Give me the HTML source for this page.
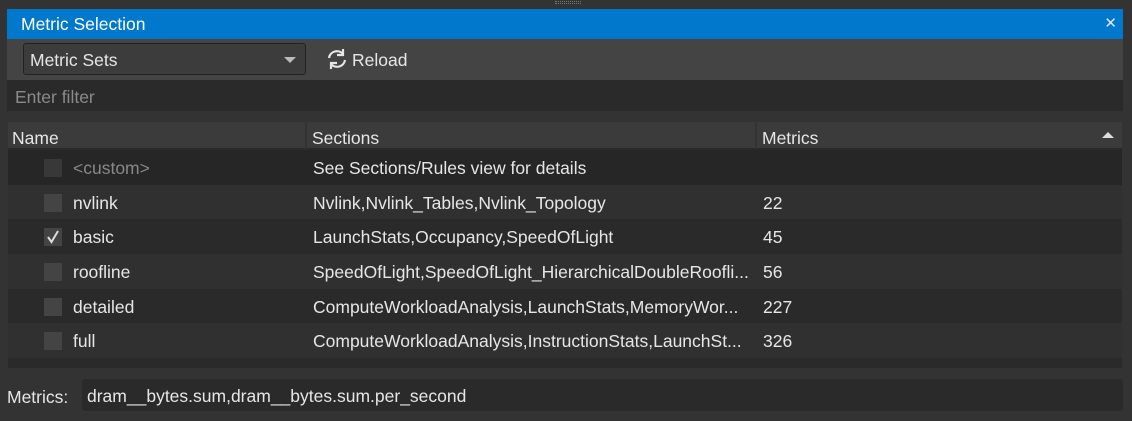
<!DOCTYPE html>
<html><head><style>
*{margin:0;padding:0;box-sizing:border-box}
body{width:1132px;height:421px;background:#333;font-family:"Liberation Sans",sans-serif;color:#e6e6e6;font-size:17.5px;position:relative;overflow:hidden}
.abs{position:absolute}
.title{left:7px;top:9px;width:1116px;height:30px;background:#0078cc;color:#fff;}
.title span{position:absolute;left:14px;top:5px;font-size:17.5px}
.title .x{left:auto;right:6px;top:5px;font-size:15px;color:#dbe9f7}
.tool{left:7px;top:39px;width:1116px;height:41px;background:#444}
.combo{left:23px;top:43px;width:283px;height:32px;background:#3c3c3c;border:1px solid #222;border-radius:3px}
.combo span{position:absolute;left:6px;top:6px}
.combo i{position:absolute;right:9px;top:13px;width:0;height:0;border-left:6px solid transparent;border-right:6px solid transparent;border-top:6px solid #bbb}
.filter{left:7px;top:80px;width:1116px;height:31px;background:#2a2a2a;color:#8a8a8a}
.filter span{position:absolute;left:8px;top:7px}
.table{left:8px;top:122px;width:1114px;height:246px;background:#2a2a2a}
.hdr{left:8px;top:122px;width:1114px;height:27px;background:#3b3b3b;border-bottom:1px solid #2a2a2a}
.hdr span{position:absolute;top:6px}
.sep{position:absolute;top:0;width:2px;height:27px;background:#333}
.row{position:absolute;left:8px;width:1114px}
.row span{position:absolute;top:8px;white-space:nowrap}
.cb{position:absolute;left:44px;top:9px;width:18px;height:18px;background:#444}
.lab{left:7px;top:387px}
.field{left:82px;top:379px;width:1041px;height:32px;background:#2a2a2a;border-radius:3px}
.field span{position:absolute;left:5px;top:7px}
</style></head><body>
<div class="abs" style="left:555px;top:1px;width:26px;height:3px;border-top:1px dotted #777;border-bottom:1px dotted #777"></div>
<div class="abs title"><span>Metric Selection</span><span class="x">✕</span></div>
<div class="abs tool"></div>
<div class="abs combo"><span>Metric Sets</span><i></i></div>
<svg class="abs" style="left:326px;top:48px" width="22" height="22" viewBox="0 0 22 22" fill="none" stroke="#e6e6e6" stroke-width="2.2"><path d="M3 10 A8 8 0 0 1 17 6"/><path d="M17 1v6h-6" stroke-linejoin="miter"/><path d="M19 12 A8 8 0 0 1 5 16"/><path d="M5 21v-6h6"/></svg>
<div class="abs" style="left:352px;top:50px">Reload</div>
<div class="abs filter"><span>Enter filter</span></div>
<div class="abs table"></div>
<div class="abs hdr"><span style="left:4px">Name</span><div class="sep" style="left:297px"></div><span style="left:304px">Sections</span><div class="sep" style="left:747px"></div><span style="left:754px">Metrics</span>
<i style="position:absolute;right:8px;top:10px;border-left:6px solid transparent;border-right:6px solid transparent;border-bottom:6px solid #ddd"></i></div>
<div class="row" style="top:150px;height:35px;background:#262626"><div class="cb" style="left:36px;background:#383838"></div><span style="left:65px;color:#888">&lt;custom&gt;</span><span style="left:305px">See Sections/Rules view for details</span></div>
<div class="row" style="top:185px;height:34px;background:#303030"><div class="cb" style="left:36px"></div><span style="left:65px">nvlink</span><span style="left:305px">Nvlink,Nvlink_Tables,Nvlink_Topology</span><span style="left:755px">22</span></div>
<div class="row" style="top:219px;height:35px;background:#2a2a2a"><div class="cb" style="left:36px"><svg width="18" height="18" viewBox="0 0 18 18"><path d="M4 9l3.5 5L14 3" fill="none" stroke="#ddd" stroke-width="2"/></svg></div><span style="left:65px">basic</span><span style="left:305px">LaunchStats,Occupancy,SpeedOfLight</span><span style="left:755px">45</span></div>
<div class="row" style="top:254px;height:35px;background:#303030"><div class="cb" style="left:36px"></div><span style="left:65px">roofline</span><span style="left:305px">SpeedOfLight,SpeedOfLight_HierarchicalDoubleRoofli...</span><span style="left:755px">56</span></div>
<div class="row" style="top:289px;height:34px;background:#2a2a2a"><div class="cb" style="left:36px"></div><span style="left:65px">detailed</span><span style="left:305px">ComputeWorkloadAnalysis,LaunchStats,MemoryWor...</span><span style="left:755px">227</span></div>
<div class="row" style="top:323px;height:35px;background:#303030"><div class="cb" style="left:36px"></div><span style="left:65px">full</span><span style="left:305px">ComputeWorkloadAnalysis,InstructionStats,LaunchSt...</span><span style="left:755px">326</span></div>
<div class="abs lab">Metrics:</div>
<div class="abs field"><span>dram__bytes.sum,dram__bytes.sum.per_second</span></div>
</body></html>
